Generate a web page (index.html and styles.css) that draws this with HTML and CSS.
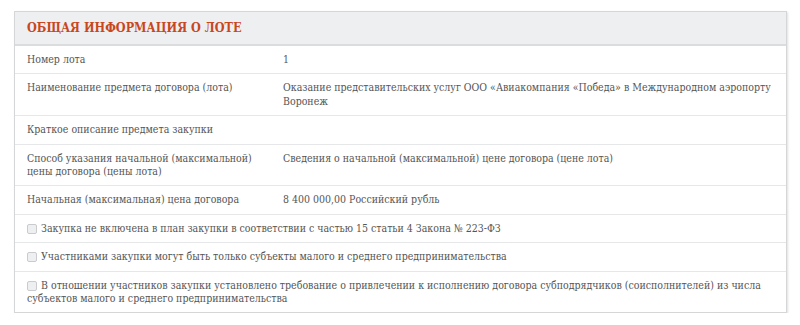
FILE: index.html
```html
<!DOCTYPE html>
<html lang="ru">
<head>
<meta charset="utf-8">
<link rel="stylesheet" href="styles.css">
</head>
<body>
<div class="panel">
  <div class="panel-head"><h2 class="title">ОБЩАЯ ИНФОРМАЦИЯ О ЛОТЕ</h2></div>
  <div class="row"><div class="label">Номер лота</div><div class="value">1</div></div>
  <div class="row"><div class="label">Наименование предмета договора (лота)</div><div class="value">Оказание представительских услуг ООО «Авиакомпания «Победа» в Международном аэропорту Воронеж</div></div>
  <div class="row"><div class="label">Краткое описание предмета закупки</div><div class="value"></div></div>
  <div class="row"><div class="label">Способ указания начальной (максимальной) цены договора (цены лота)</div><div class="value">Сведения о начальной (максимальной) цене договора (цене лота)</div></div>
  <div class="row"><div class="label">Начальная (максимальная) цена договора</div><div class="value">8 400 000,00 Российский рубль</div></div>
  <div class="row check"><span class="box"></span>Закупка не включена в план закупки в соответствии с частью 15 статьи 4 Закона № 223-ФЗ</div>
  <div class="row check"><span class="box"></span>Участниками закупки могут быть только субъекты малого и среднего предпринимательства</div>
  <div class="row check last"><span class="box"></span>В отношении участников закупки установлено требование о привлечении к исполнению договора субподрядчиков (соисполнителей) из числа субъектов малого и среднего предпринимательства</div>
</div>
</body>
</html>
```
FILE: styles.css
```css
html, body { margin: 0; padding: 0; background: #fff; }
body { padding: 11px 13px 0 14px; font-family: "DejaVu Serif Condensed", "DejaVu Serif", serif; font-stretch: condensed; }
.panel {
  border: 1px solid #d4d6d8;
  box-shadow: 1px 1px 2px rgba(0,0,0,0.12);
  background: #fff;
}
.panel-head {
  background: #eeeff1;
  border-bottom: 2px solid #dadcde;
  height: 32px;
  display: flex;
  align-items: center;
  padding-left: 12px;
}
.title {
  margin: 0;
  font-size: 12.5px;
  line-height: 16px;
  font-weight: bold;
  color: #c8471d;
}
.row {
  display: flex;
  padding: 7px 12px;
  line-height: 13.4px;
  font-size: 10.5px;
  color: #555;
  border-bottom: 1px solid #e6e7e8;
}
.row.last { border-bottom: none; }
.label { width: 256px; flex: none; padding-right: 12px; box-sizing: border-box; }
.value { flex: 1; }
.check { display: block; }
.box {
  display: inline-block;
  box-sizing: border-box;
  width: 10px; height: 10px;
  border: 1px solid #c9cbcd;
  border-radius: 2px;
  background: #eeeff0;
  vertical-align: top;
  margin-top: 2px;
  margin-right: 4px;
}
```
